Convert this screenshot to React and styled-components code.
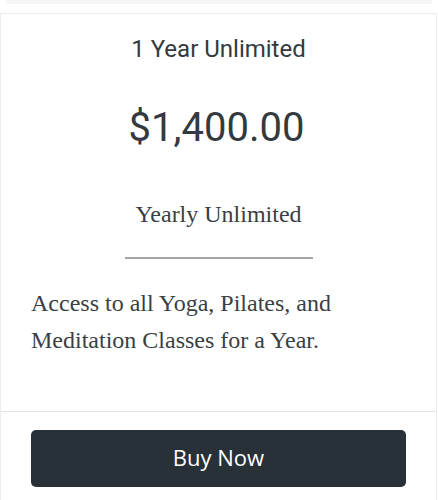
import React from "react";
import styled, { createGlobalStyle } from "styled-components";

const Global = createGlobalStyle`
  html, body { margin: 0; padding: 0; background: #ffffff; }
  body { width: 438px; height: 500px; overflow: hidden; }
`;

const Page = styled.div`
  width: 438px;
  height: 500px;
  display: flex;
  flex-direction: column;
  background: #ffffff;
`;

const TopStrip = styled.div`
  height: 4px;
  margin: 0 6px;
  background: #f6f6f6;
  flex: none;
`;

const Card = styled.div`
  margin-top: 9px;
  width: 437px;
  flex: 1;
  box-sizing: border-box;
  border: 1px solid #ededed;
  border-bottom: none;
  display: flex;
  flex-direction: column;
  background: #fff;
`;

const Body = styled.div`
  display: flex;
  flex-direction: column;
  align-items: center;
  padding: 0 30px;
  height: 397px;
  box-sizing: border-box;
`;

const Title = styled.h3`
  margin: 21px 0 0;
  font-family: Roboto, "Liberation Sans", sans-serif;
  font-weight: 400;
  font-size: 24px;
  line-height: 28px;
  color: #333a3f;
`;

const Price = styled.div`
  margin-top: 41px;
  margin-right: 4px;
  font-family: Roboto, "Liberation Sans", sans-serif;
  font-weight: 400;
  font-size: 40px;
  line-height: 48px;
  color: #333a3f;
`;

const Subtitle = styled.div`
  margin-top: 48px;
  font-family: "Liberation Serif", "Times New Roman", serif;
  font-size: 24px;
  line-height: 28px;
  color: #3a3f44;
`;

const Rule = styled.hr`
  width: 188px;
  margin: 29px 0 0;
  border: none;
  border-top: 2px solid #a5a5a5;
`;

const Description = styled.p`
  align-self: stretch;
  margin: 26px 0 0;
  font-family: "Liberation Serif", "Times New Roman", serif;
  font-size: 24px;
  line-height: 37px;
  color: #3a3f44;
`;

const Footer = styled.div`
  border-top: 1px solid #e2e2e2;
  padding: 18px 30px 0;
  display: flex;
`;

const BuyButton = styled.button`
  flex: 1;
  height: 57px;
  padding: 0 0 3px;
  border: none;
  border-radius: 5px;
  background: #283137;
  color: #ffffff;
  font-family: "Open Sans", "Noto Sans", sans-serif;
  font-size: 22px;
  cursor: pointer;
`;

export default function App() {
  return (
    <Page>
      <Global />
      <TopStrip />
      <Card>
        <Body>
          <Title>1 Year Unlimited</Title>
          <Price>$1,400.00</Price>
          <Subtitle>Yearly Unlimited</Subtitle>
          <Rule />
          <Description>
            Access to all Yoga, Pilates, and Meditation Classes for a Year.
          </Description>
        </Body>
        <Footer>
          <BuyButton>Buy Now</BuyButton>
        </Footer>
      </Card>
    </Page>
  );
}
